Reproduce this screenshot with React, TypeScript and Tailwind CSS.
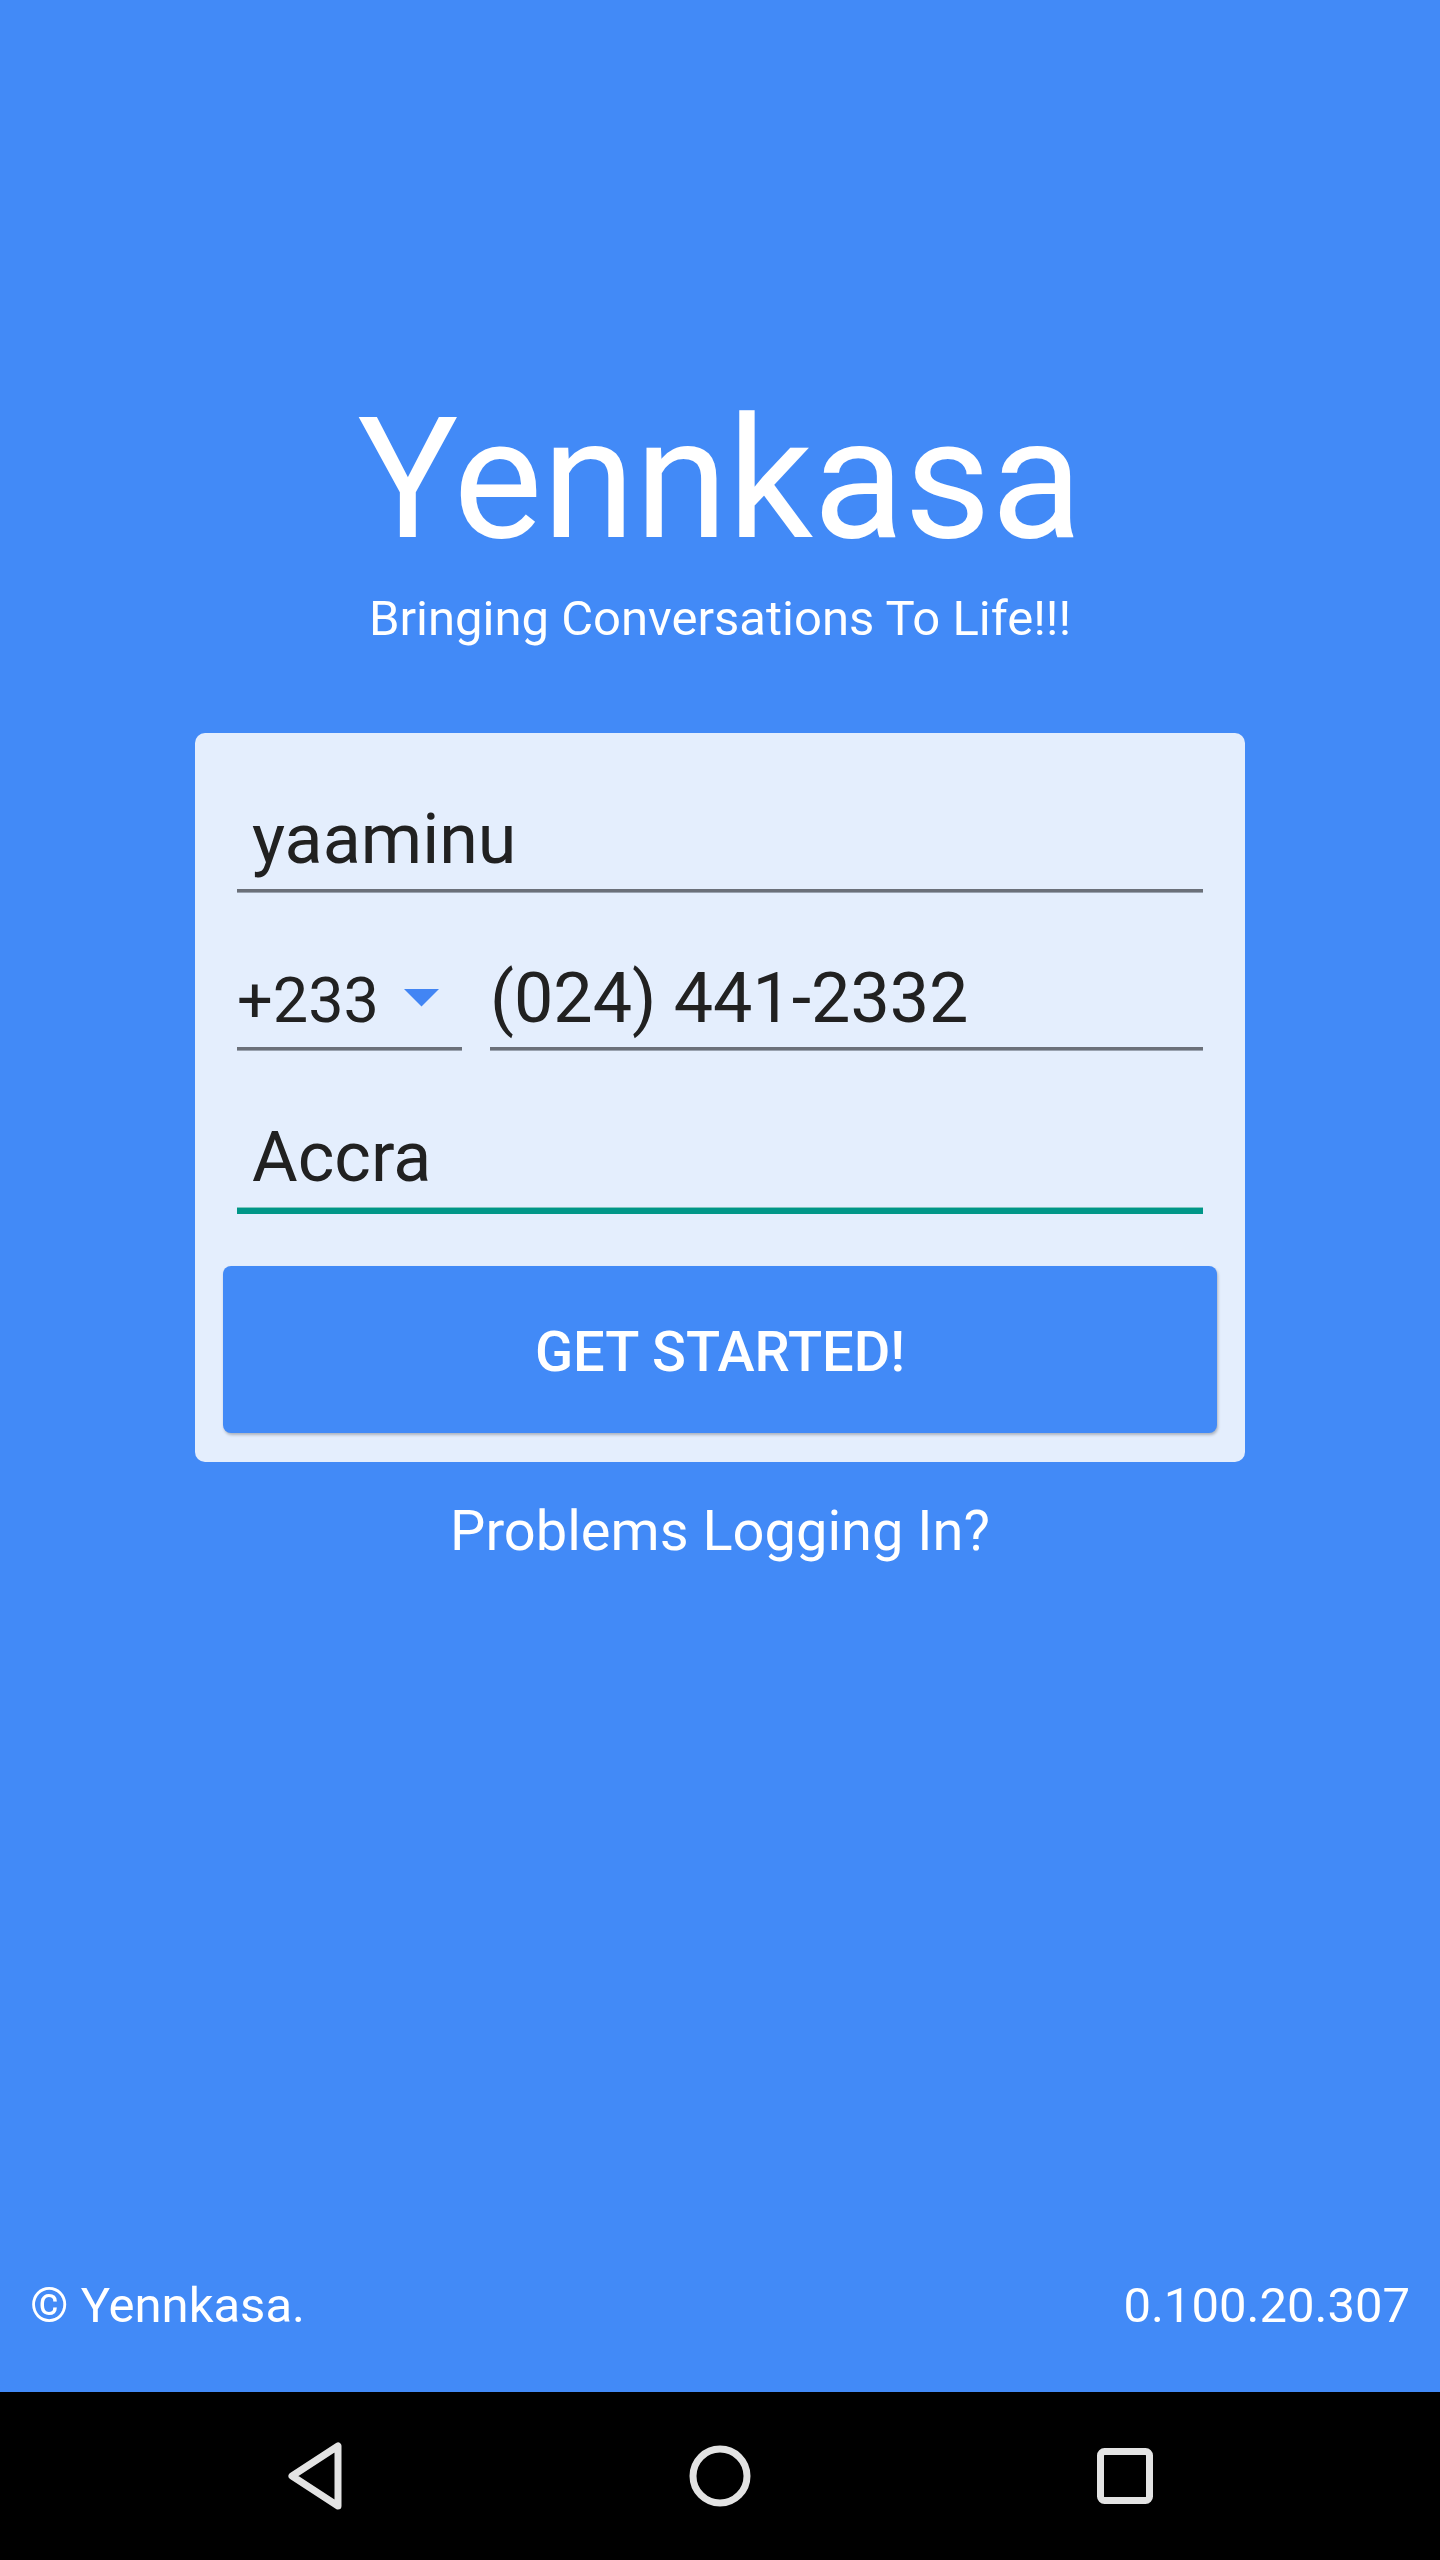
import React from "react";

function Field({
  value,
  focused = false,
}: {
  value: string;
  focused?: boolean;
}) {
  return (
    <div>
      <div className="pl-[15px] text-[70px] leading-none text-[#212121]">{value}</div>
      {focused ? (
        <div className="mt-[15px] h-[7px] border-t border-[#7fc7bd] bg-[#009688]" />
      ) : (
        <div className="mt-[15px] h-[4px] border-b border-[#9aa3b0] bg-[#6b7079]" />
      )}
    </div>
  );
}

function NavBar() {
  return (
    <div className="flex h-[168px] items-center justify-center bg-black">
      <div className="flex w-[405px] justify-center">
        <svg width="60" height="68" viewBox="0 0 60 68" fill="none">
          <path
            d="M53 4 L53 64 L7 34 Z"
            stroke="#e3e3e3"
            strokeWidth="7"
            strokeLinejoin="round"
          />
        </svg>
      </div>
      <div className="flex w-[405px] justify-center">
        <svg width="64" height="64" viewBox="0 0 64 64" fill="none">
          <circle cx="32" cy="32" r="27" stroke="#e3e3e3" strokeWidth="7" />
        </svg>
      </div>
      <div className="flex w-[405px] justify-center">
        <svg width="58" height="58" viewBox="0 0 58 58" fill="none">
          <rect x="4.5" y="4.5" width="49" height="49" rx="4" stroke="#e3e3e3" strokeWidth="7" />
        </svg>
      </div>
    </div>
  );
}

export default function App() {
  return (
    <div className="flex h-[2560px] w-[1440px] flex-col font-['Roboto',sans-serif]">
      <div className="flex flex-1 flex-col items-center bg-[#428af7] text-white">
        <h1 className="mt-[396px] text-[168px] font-normal leading-none">Yennkasa</h1>
        <p className="mt-[30px] text-[49px] leading-none">Bringing Conversations To Life!!!</p>

        <div className="mt-[90px] w-[1050px] rounded-[10px] bg-[#e4eefd] px-[28px] pb-[29px] pt-[71px]">
          <div className="px-[14px]">
            <Field value="yaaminu" />

            <div className="mt-[70px] flex items-end gap-[28px]">
              <div className="w-[225px]">
                <div className="flex items-center">
                  <span className="text-[63px] leading-none text-[#212121]">+233</span>
                  <svg width="35" height="18" viewBox="0 0 35 18" className="ml-[25px] mt-[-6px]">
                    <path d="M0 0 L35 0 L17.5 17.5 Z" fill="#4285f4" />
                  </svg>
                </div>
                <div className="mt-[15px] h-[4px] border-b border-[#9aa3b0] bg-[#6b7079]" />
              </div>
              <div className="flex-1">
                <div className="text-[70px] leading-none text-[#212121]">(024) 441-2332</div>
                <div className="mt-[14px] h-[4px] border-b border-[#9aa3b0] bg-[#6b7079]" />
              </div>
            </div>

            <div className="mt-[71px]">
              <Field value="Accra" focused />
            </div>
          </div>

          <button
            type="button"
            className="mt-[52px] flex h-[167px] w-full items-center justify-center rounded-[8px] bg-[#428af7] pt-[4px] text-[56px] font-medium leading-none text-white shadow-[1px_2px_3px_rgba(0,0,0,0.25)]"
          >
            GET STARTED!
          </button>
        </div>

        <p className="mt-[41px] text-[56px] leading-none">Problems Logging In?</p>

        <div className="flex-1" />

        <div className="flex w-full items-center justify-between px-[30px] pb-[62px] text-[49px] leading-none">
          <span>© Yennkasa.</span>
          <span>0.100.20.307</span>
        </div>
      </div>
      <NavBar />
    </div>
  );
}
